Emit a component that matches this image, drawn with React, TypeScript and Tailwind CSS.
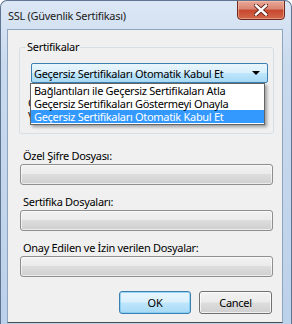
const font = { fontFamily: '"Noto Sans", "Open Sans", sans-serif' };

const options = [
  'Bağlantıları ile Geçersiz Sertifikaları Atla',
  'Geçersiz Sertifikaları Göstermeyi Onayla',
  'Geçersiz Sertifikaları Otomatik Kabul Et',
];

function FileField({ label, top }: { label: string; top: string }) {
  return (
    <>
      <div className={`${top} ml-[15px] h-[15px] leading-[15px] text-black`}>{label}</div>
      <div className="mt-[1px] ml-[12px] h-[21px] w-[253px] rounded-[3px] border border-[#8e8f8f] bg-[linear-gradient(to_bottom,#f2f2f2,#ebebeb_45%,#dddddd_50%,#cfcfcf)] shadow-[inset_0_0_0_1px_rgba(255,255,255,0.6)]" />
    </>
  );
}

export default function App() {
  return (
    <div
      className="relative flex h-[324px] w-[292px] flex-col overflow-hidden rounded-t-[7px] border border-b-0 border-[#5f7490] bg-[linear-gradient(to_bottom,#dce7f5,#c9daee_20%,#bcd1ea)] text-[11px] tracking-[-0.3px] text-black"
      style={font}
    >
      {/* title bar */}
      <div className="flex h-[28px] items-center pl-[7px] leading-none text-[#1b1b1b]">
        SSL (Güvenlik Sertifikası)
      </div>

      {/* close button */}
      <div className="absolute right-[6px] top-[-1px] flex h-[20px] w-[48px] items-center justify-center rounded-b-[4px] border border-[#6a2a22] bg-[linear-gradient(to_bottom,#e9a897,#d98472_45%,#c8462d_50%,#d2684c)] shadow-[inset_0_0_0_1px_rgba(255,200,180,0.5)]">
        <svg width="14" height="12" viewBox="0 0 14 12">
          <path d="M2 1.5 L12 10.5 M12 1.5 L2 10.5" stroke="#5a2018" strokeWidth="4.2" strokeLinecap="square" />
          <path d="M2 1.5 L12 10.5 M12 1.5 L2 10.5" stroke="#ffffff" strokeWidth="2.4" strokeLinecap="square" />
        </svg>
      </div>

      {/* client area */}
      <div className="mb-[1px] ml-[6px] mr-[8px] flex flex-1 flex-col border border-[#8fa4bd] border-b-[#4c4c4c] bg-[#f0f0f0]">
        {/* group box */}
        <div className="relative mt-[17px] ml-[11px] h-[87px] w-[255px] rounded-[3px] border border-[#d5dfe5]">
          <span className="absolute left-[6px] top-[-9px] bg-[#f0f0f0] px-[1px] leading-[16px]">Sertifikalar</span>

          <div className="relative mt-[15px] ml-[11px] flex h-[20px] w-[237px] items-center rounded-[2px] border border-[#3c7fb1] bg-[linear-gradient(to_bottom,#eaf6fd,#d9f0fc_48%,#bee6fd_52%,#a7d9f5)] pl-[2px] leading-none">
            Geçersiz Sertifikaları Otomatik Kabul Et
            <svg className="absolute right-[7px] top-[7px]" width="8" height="4" viewBox="0 0 8 4">
              <path d="M0 0 H8 L4 4 Z" fill="#000" />
            </svg>

            {/* open list */}
            <div className="absolute left-[-2px] top-[19px] z-10 w-[235px] border border-[#646464] bg-white pb-[1px] shadow-[2px_2px_3px_rgba(0,0,0,0.35)]">
              {options.map((o, i) => (
                <div
                  key={o}
                  className={`h-[13px] px-[3px] leading-[13px] ${i === 2 ? 'bg-[#3399ff] text-white' : 'text-black'}`}
                >
                  {o}
                </div>
              ))}
            </div>
          </div>

          <div className="mt-[13px] ml-[8px] leading-[13px]">Ö</div>
          <div className="ml-[8px] leading-[13px]">V</div>
        </div>

        <FileField label="Özel Şifre Dosyası:" top="mt-[14px]" />
        <FileField label="Sertifika Dosyaları:" top="mt-[9px]" />
        <FileField label="Onay Edilen ve İzin verilen Dosyalar:" top="mt-[9px]" />

        <div className="mt-[14px] flex justify-end gap-[8px] pr-[10px]">
          <button className="h-[23px] w-[72px] rounded-[3px] border border-[#3c7fb1] bg-[linear-gradient(to_bottom,#eaf6fd,#d9f0fc_48%,#bee6fd_52%,#a7d9f5)] leading-none shadow-[inset_0_0_0_1px_rgba(120,200,240,0.7)]">
            OK
          </button>
          <button className="h-[23px] w-[73px] rounded-[3px] border border-[#707070] bg-[linear-gradient(to_bottom,#f2f2f2,#ebebeb_48%,#dddddd_52%,#cfcfcf)] leading-none shadow-[inset_0_0_0_1px_rgba(255,255,255,0.7)]">
            Cancel
          </button>
        </div>
      </div>
    </div>
  );
}
